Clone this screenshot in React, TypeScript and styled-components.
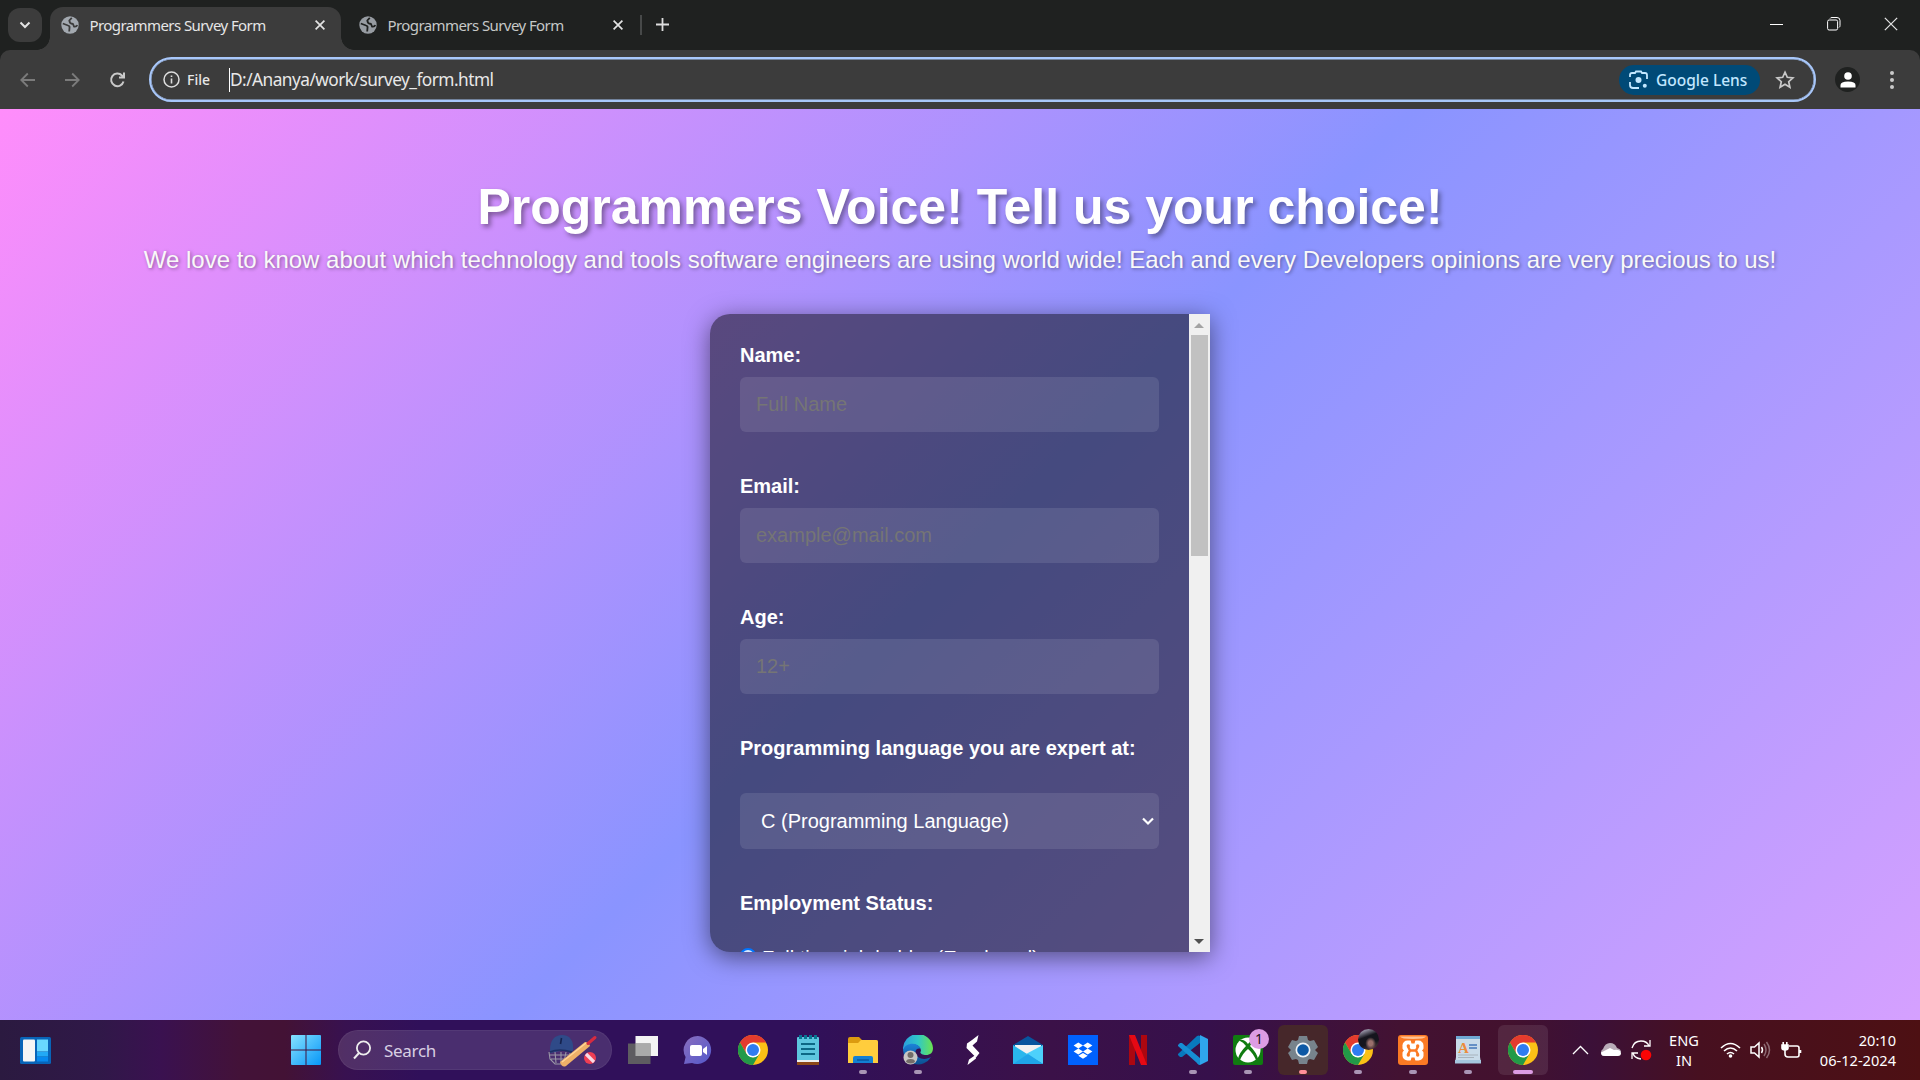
import React from 'react';
import styled, { createGlobalStyle } from 'styled-components';

const ui = '"Noto Sans", "Open Sans", sans-serif';
const arial = '"Liberation Sans", Arial, sans-serif';

const Global = createGlobalStyle`
  * { box-sizing: border-box; }
  body { margin: 0; background: #1f2120; overflow: hidden; }
  svg { display: block; flex: none; }
`;

const Screen = styled.div`
  width: 1920px; height: 1080px; display: flex; flex-direction: column; overflow: hidden;
  font-family: ${ui};
`;

const TabStrip = styled.header`
  height: 50px; display: flex; background: #1f2120; color: #dfe1e0; flex: none;
`;
const TabSearch = styled.button`
  width: 34px; height: 34px; margin: 8px 0 0 8px; padding: 0; border: 0; border-radius: 12px;
  background: #3c3c3c; display: grid; place-items: center; flex: none;
`;
const Tab = styled.div<{ $active?: boolean }>`
  position: relative; height: 43px; margin-top: 7px; display: flex; align-items: center;
  width: ${p => (p.$active ? 291 : 298)}px;
  margin-left: ${p => (p.$active ? 8 : 0)}px;
  padding: 0 16px 7px ${p => (p.$active ? 11 : 18)}px;
  background: ${p => (p.$active ? '#3c3c3c' : 'transparent')};
  border-radius: 13px 13px 0 0; color: ${p => (p.$active ? '#e6e6e6' : '#c6c8c7')};
  ${p => p.$active && `
    &::before, &::after { content: ''; position: absolute; bottom: 0; width: 13px; height: 13px; }
    &::before { left: -13px; background: radial-gradient(circle at 0 0, transparent 12.5px, #3c3c3c 13px); }
    &::after { right: -13px; background: radial-gradient(circle at 100% 0, transparent 12.5px, #3c3c3c 13px); }
  `}
`;
const TabTitle = styled.span`
  font-size: 15px; margin-left: 10.5px; white-space: nowrap; flex: 1; letter-spacing: -0.58px;
`;
const Divider = styled.i`width: 2px; height: 20px; background: #474949; margin: 15px 13px 0 1px;`;
const PlusWrap = styled.div`margin-top: 17px;`;
const WindowButtons = styled.div`
  margin-left: auto; display: flex; gap: 43px; padding: 17px 22px 0 0;
`;

const Toolbar = styled.div`
  height: 59px; background: #3c3c3c; display: flex; align-items: center; padding: 0 18px 0 17px;
  border-radius: 10px 10px 0 0; flex: none;
`;
const Nav = styled.div`display: flex; gap: 23px; width: 132px;`;
const AddressBar = styled.div`
  width: 1667px; height: 45px; border: 2px solid #a8c7fa; border-radius: 23px; display: flex;
  box-shadow: inset 0 0 0 .5px #a8c7fa;
  align-items: center; padding: 0 19px 0 12px; color: #e8e8e8;
`;
const FileChip = styled.span`font-size: 14px; font-weight: 500; margin-left: 7px; width: 42px;`;
const Url = styled.span`
  font-size: 17.3px; border-left: 1.5px solid #fff; height: 24px; line-height: 24px; letter-spacing: -0.54px;
  flex: 1;
`;
const Lens = styled.button`
  width: 141px; height: 30px; border: 0; border-radius: 15px; background: #004a77; color: #c2e7ff;
  font: 500 15.5px ${ui}; display: flex; align-items: center; gap: 8px; padding: 0 0 0 10px;
  margin-right: 15px; white-space: nowrap;
`;
const Avatar = styled.div`
  width: 25px; height: 25px; border-radius: 50%; background: #1f2120; margin-left: 19px;
  display: grid; place-items: center;
`;
const Menu = styled.div`margin-left: auto;`;

const Page = styled.main`
  height: 911px; flex: none; display: flex; flex-direction: column; align-items: center;
  background: linear-gradient(135deg, #ff8dfb, #8a94ff, #d5a0ff);
  font-family: ${arial}; color: #fff;
`;
const Title = styled.h1`
  margin: 69px 0 0; font-size: 50px; line-height: 58px; font-weight: 700;
  text-shadow: 2.5px 2.5px 5px rgba(0,0,0,.4); white-space: nowrap;
`;
const Subtitle = styled.p`
  margin: 10px 0 0; font-size: 24px; line-height: 28px; text-shadow: 1.25px 1.25px 3.75px rgba(0,0,0,.4);
  white-space: nowrap; color: #f9f9f9;
`;
const Card = styled.section`
  width: 500px; height: 638px; border-radius: 20px 0 0 20px;
  display: flex; background: rgba(0,0,0,.5); overflow: hidden;
`;
const CardShadow = styled.div`
  border-radius: 20px 0 0 20px; margin-top: 40px; box-shadow: 0 5px 25px rgba(0,0,0,.5);
`;
const Form = styled.form`flex: 1; padding: 29px 30px 0; overflow: hidden;`;
const Label = styled.label<{ $gap: number }>`
  display: block; font-size: 20px; line-height: 24px; font-weight: 700; margin-bottom: ${p => p.$gap}px;
  white-space: nowrap;
`;
const Input = styled.input`
  display: block; width: 419px; height: 55px; border: 0; border-radius: 6px; margin-bottom: 42px;
  background: rgba(255,255,255,.1); color: #fff; font: 20px ${arial}; padding: 0 16px;
  &::placeholder { color: #757575; opacity: 1; }
`;
const SelectBox = styled.div`
  width: 419px; height: 56px; border-radius: 6px; margin-bottom: 42px; background: rgba(255,255,255,.1);
  font-size: 20px; display: flex; align-items: center; justify-content: space-between; padding: 0 4px 0 21px;
`;
const RadioRow = styled.div`display: flex; align-items: flex-start; font-size: 20px; line-height: 24px; white-space: nowrap;`;
const Radio = styled.i`
  width: 16px; height: 16px; border-radius: 50%; border: 2px solid #0075ff; background: #d8e8ff;
  margin: 2px 6px 0 0;
`;
const ScrollTrack = styled.div`
  width: 21px; background: #f0f0f0; display: flex; flex-direction: column; align-items: center;
`;
const ArrowBox = styled.div<{ $top?: number }>`
  height: 21px; width: 21px; display: grid; place-items: center; padding: ${p => p.$top || 0}px 1px 0 0;
`;
const Thumb = styled.div`width: 17px; height: 221px; background: #c1c1c1; margin-bottom: auto;`;

const Taskbar = styled.footer`
  height: 60px; flex: none; display: flex; align-items: center; color: #fff; position: relative;
  background: linear-gradient(90deg, #2b1a40 0, #301848 100px, #3a1150 160px, #431238 240px, #431235 285px, #381150 345px,
    #30105a 420px, #30105a 800px, #3b1148 1050px, #36104b 1210px, #431232 1400px, #43112e 1510px, #3b1038 1590px, #471020 1700px, #4d1013 1920px);
`;
const Widgets = styled.div`width: 291px; padding-left: 20px;`;
const Search = styled.div`
  width: 274px; height: 40px; margin-left: 17px; border-radius: 20px; background: rgba(255,255,255,.13);
  border: 1px solid rgba(255,255,255,.05); display: flex; align-items: center; padding: 0 8px 0 13px;
  font-size: 17px; color: #d8cfe3;
`;
const SearchText = styled.span`flex: 1; margin-left: 12px; letter-spacing: -0.3px;`;
const Apps = styled.div`display: flex; margin-left: 3px;`;
const AppSlot = styled.div<{ $bg?: string; $mark?: string; $wide?: boolean }>`
  position: relative; width: 55px; height: 60px; display: grid; place-items: center;
  &::before { content: ''; position: absolute; inset: 5px 2.5px; border-radius: 6px; background: ${p => p.$bg || 'transparent'}; }
  &::after {
    content: ''; position: absolute; bottom: 6px; height: 4px; border-radius: 2px;
    width: ${p => (p.$wide ? 20 : 8)}px; background: ${p => p.$mark || 'transparent'};
  }
  svg { position: relative; }
`;
const Badge = styled.b`
  position: absolute; top: 9px; right: 6px; width: 20px; height: 20px; border-radius: 50%; background: #dc9ce4;
  color: #1f1022; font-weight: 400; font-size: 14px; line-height: 20px; text-align: center;
`;
const Photo = styled.div`
  position: absolute; right: 6px; top: 9px; width: 21px; height: 21px; border-radius: 50%;
  background: radial-gradient(ellipse at 60% 68%, #9a706c 0 12%, transparent 30%), linear-gradient(160deg, #8d8a9c 0 15%, #15151d 38% 65%, #6b4749);
`;
const Tray = styled.div`display: flex; align-items: center; margin-left: auto; height: 60px; padding-right: 24px;`;
const Stack = styled.div<{ $align: string; $w: number; $m: number }>`
  width: ${p => p.$w}px; margin: 0 ${p => p.$m}px 0 0; text-align: ${p => p.$align};
  font-size: 14.6px; line-height: 20px; white-space: nowrap;
`;
const TrayIcon = styled.div<{ $m: number }>`margin-right: ${p => p.$m}px;`;

const Globe = ({ dim }: { dim?: boolean }) => (
  <svg width="18" height="18" viewBox="0 0 18 18">
    <circle cx="9" cy="9" r="8.7" fill={dim ? '#979ca2' : '#a3a9b0'} />
    <path d="M1.800 7.500 7 9.500Q9 10 8.500 12L8.200 15.500M10.800 1.800 8.300 4.500Q8.500 7.800 12 8L13 10.500Q15.500 11 16.300 9" fill="none" stroke={dim ? '#1f2120' : '#3c3c3c'} strokeWidth="1.800" />
  </svg>
);
const Cross = ({ s = 10, w = 1.7 }: { s?: number; w?: number }) => (
  <svg width={s} height={s} viewBox="0 0 10 10"><path d="M.6 .6 9.4 9.4M9.4 .6 .6 9.4" stroke="#e3e3e3" strokeWidth={w} /></svg>
);
const BackArrow = () => (
  <svg width="22" height="22" viewBox="0 0 22 22"><path d="M18 11H4.500M10.800 4.500 4.300 11l6.500 6.500" fill="none" stroke="#7b7b7b" strokeWidth="1.800" /></svg>
);
const ForwardArrow = () => (
  <svg width="22" height="22" viewBox="0 0 22 22"><path d="M3 11H16.500M10.200 4.500 16.700 11l-6.500 6.500" fill="none" stroke="#7b7b7b" strokeWidth="1.800" /></svg>
);
const Chrome = () => (
  <svg width="30" height="30" viewBox="0 0 30 30">
    <circle cx="15" cy="15" r="15" fill="#fbc116" />
    <path d="M2 7.5A15 15 0 0 1 28 7.5H15L8.5 18.8Z" fill="#e33b2e" />
    <path d="M2 7.5A15 15 0 0 0 15 30L21.5 18.8 15 22.5 8.5 18.8Z" fill="#229a48" />
    <circle cx="15" cy="15" r="7.5" fill="#fff" /><circle cx="15" cy="15" r="6" fill="#2f7cf0" />
  </svg>
);
const Cricket = () => (
  <svg width="56" height="34" viewBox="0 0 56 34">
    <path d="M2 19l1 7 5 5h7l7-5 1-6M2 22h20M4 26h17M8 19l1 11M14 19v12M19 19l-2 10" fill="none" stroke="#9a98a6" strokeWidth="1.100" />
    <path d="M3 17C3 7 8 2 15 2c8 0 12 6 11 15l-1 3q-5-3-12-2l-10 2z" fill="#2f4a88" />
    <path d="M3 19q9-4 22 0" fill="none" stroke="#1d2f63" strokeWidth="1.500" /><path d="M14.500 5l-1 6" stroke="#14224d" strokeWidth="1.600" />
    <path d="M13 29 38 9q4 0 5 4L19 33q-4 2-6-4z" fill="#eeb068" /><path d="M15 29 39 10" stroke="#ffd597" strokeWidth="1.400" />
    <path d="M41 10.500 48 4.500" stroke="#d62b40" strokeWidth="3" strokeLinecap="round" />
    <circle cx="43" cy="25" r="6" fill="#ef3e53" /><path d="M39 21l8 8" stroke="#f7dbe6" strokeWidth="3.200" />
  </svg>
);

const TaskView = () => (
  <svg width="30" height="28" viewBox="0 0 30 28"><path d="M7.5 0H30V20H7.5Z" fill="#f3f3f3" /><path d="M0 7.5H22.5V28H0Z" fill="#626262" opacity=".93" /><path d="M7.5 7.5H22.5V20H7.5Z" fill="#aaa" /></svg>
);
const Chat = () => (
  <svg width="30" height="30" viewBox="0 0 30 30">
    <defs><linearGradient id="chat" x2="1" y2="1"><stop stopColor="#8a6ebd" /><stop offset="1" stopColor="#5359cc" /></linearGradient></defs>
    <path d="M15 1A14 14 0 1 1 9 28L1 29 2.6 22A14 14 0 0 1 15 1Z" fill="url(#chat)" />
    <rect x="7" y="10" width="12" height="11" rx="2" fill="#fff" /><path d="M20 14l4-3v9l-4-3z" fill="#fff" />
  </svg>
);
const Notepad = () => (
  <svg width="22" height="30" viewBox="0 0 22 30">
    <rect y="2" width="22" height="24" rx="1" fill="#5dc6df" /><path d="M0 25h22v2H0z" fill="#eee" /><path d="M0 27h22v3H0z" fill="#8b4718" />
    <path d="M4 9h14M4 14h14M4 19h14" stroke="#0c6885" strokeWidth="2" />
    <path d="M3.500 0v4M8.500 0v4M13.500 0v4M18.500 0v4" stroke="#087593" strokeWidth="3" />
  </svg>
);
const Folder = () => (
  <svg width="30" height="26" viewBox="0 0 30 26">
    <path d="M0 2q0-2 2-2h9l3 3h14q2 0 2 2v8H0z" fill="#dc9b10" />
    <path d="M0 6h10l3-3h15q2 0 2 2v21H0z" fill="#ffcd3d" />
    <path d="M5 26v-5q0-2 2-2h16q2 0 2 2v5z" fill="#1380d3" /><path d="M9 23h12" stroke="#075198" strokeWidth="1.3" />
  </svg>
);
const Edge = () => (
  <svg width="30" height="30" viewBox="0 0 30 30">
    <defs>
      <linearGradient id="edgeTop"><stop stopColor="#2a9ddd" /><stop offset=".5" stopColor="#30c7c8" /><stop offset="1" stopColor="#6be34f" /></linearGradient>
      <linearGradient id="edgeLow" x2="0" y2="1"><stop stopColor="#1c82d8" /><stop offset="1" stopColor="#0b4f91" /></linearGradient>
    </defs>
    <path d="M0 15A15 15 0 0 1 30 13C30 18 27 20 23 20S16 18 18 16C18 9 7 6 0 15Z" fill="url(#edgeTop)" />
    <path d="M0 15C3 7 15 7 18 14 13 12 10 18 15 22 19 25 25 24 28 22A15 15 0 0 1 0 15Z" fill="url(#edgeLow)" />
    <circle cx="7.5" cy="22.5" r="7" fill="#c9c7c4" /><circle cx="7.5" cy="20" r="3" fill="#736d69" /><path d="M3 27q0-3 4.500-3t4.500 3q-4 3-9 0z" fill="#736d69" />
  </svg>
);
const Bolt = () => (
  <svg width="14" height="30" viewBox="0 0 14 30"><path d="M12.500 0 11 6.500 6.500 10.500 13.500 18 10 22.500 .5 13 1 8.500 6 5Z" fill="#fff" /><path d="M9.500 20 10 23.500 1.500 30 3 24.500Z" fill="#fff" /></svg>
);
const Mail = () => (
  <svg width="30" height="28" viewBox="0 0 30 28">
    <path d="M0 9 15 0 30 9V20H0Z" fill="#07559e" /><path d="M2 9h26v10H2z" fill="#f1f1f1" />
    <path d="M0 9 30 28H0Z" fill="#29b7ed" /><path d="M30 9V28L13 18Z" fill="#4dd1fb" /><path d="M0 28 15 18 30 28Z" fill="#1fa5e9" />
  </svg>
);
const Dropbox = () => (
  <svg width="30" height="30" viewBox="0 0 30 30"><path d="M0 0h30v30H0z" fill="#0061fe" />
    <path d="M10.300 7.500l4.700 3-4.700 3-4.700-3zM19.700 7.500l4.700 3-4.700 3-4.700-3zM10.300 13.500l4.700 3-4.700 3-4.700-3zM19.700 13.500l4.700 3-4.700 3-4.700-3zM15 18l4.700 2.700-4.700 3-4.700-3z" fill="#fff" /></svg>
);
const Netflix = () => (
  <svg width="18" height="30" viewBox="0 0 18 30"><path d="M0 0h6v30H0zM12 0h6v30h-6z" fill="#ac0710" /><path d="M0 0h6l12 30h-6z" fill="#e50914" /></svg>
);
const Code = () => (
  <svg width="30" height="30" viewBox="0 0 30 30">
    <path d="M22 0l8 4v22l-8 4-3-2 3-5V8z" fill="#2fa5ed" /><path d="M0 19 19 1q2-1 3 0v7L4 22H2L0 20z" fill="#0878bd" />
    <path d="M0 10 2 8h2l18 15v7q-2 0-3-2L0 11z" fill="#168dd3" />
  </svg>
);
const Xbox = () => (
  <svg width="30" height="30" viewBox="0 0 30 30"><rect width="30" height="30" rx="2" fill="#107c10" /><circle cx="15" cy="15" r="12.500" fill="#fff" />
    <path d="M7 5q4-1 8 4 4-5 8-4l-1 1q-3 1-5 5 7 7 8 13l-2 1q-3-7-8-11-5 4-8 11l-2-1q1-6 8-13-3-4-6-5z" fill="#107c10" /></svg>
);
const Gear = () => (
  <svg width="30" height="30" viewBox="0 0 30 30">
    <path d="M11 1h8l1 4 2 1 4-1 4 7-3 3 3 3-4 7-4-1-2 1-1 4h-8l-1-4-2-1-4 1-4-7 3-3-3-3 4-7 4 1 2-1z" fill="#77838c" />
    <circle cx="15" cy="15" r="7.500" fill="#eff3f6" /><circle cx="15" cy="15" r="5.800" fill="#0d59a5" />
  </svg>
);
const Xampp = () => (
  <svg width="30" height="30" viewBox="0 0 30 30"><rect width="30" height="30" rx="3" fill="#fb7a24" /><path d="M2 1.500h26q-1 2.500-13 2.500T2 1.500" fill="#ffc395" />
    <rect x="4.500" y="5.500" width="21" height="20" rx="5" fill="#fff" />
    <path d="M12.500 5h5l-1 3.500h-3zM12.500 26h5l-1-3.500h-3zM4 13.500l2 2-2 2zM26 13.500l-2 2 2 2z" fill="#fb7a24" />
    <circle cx="10.300" cy="11" r="1.700" fill="#fb7a24" /><circle cx="19.700" cy="11" r="1.700" fill="#fb7a24" />
    <circle cx="10.300" cy="20" r="1.700" fill="#fb7a24" /><circle cx="19.700" cy="20" r="1.700" fill="#fb7a24" />
    <path d="M10 11.500 12 15.500 10 19.500M20 11.500 18 15.500 20 19.500M12 15.500h6" fill="none" stroke="#fb7a24" strokeWidth="2.400" />
  </svg>
);
const WordPad = () => (
  <svg width="26" height="28" viewBox="0 0 26 28">
    <path d="M1 0h24v21l1 6H0l1-6z" fill="#c9dbe9" /><path d="M1 0h24v3H1z" fill="#6fa8d3" /><path d="M0 24h26v3.500H0z" fill="#a5c6de" />
    <text x="3" y="17" fontFamily="Liberation Serif" fontWeight="700" fontSize="15" fill="#ec8c3d">A</text>
    <path d="M14 9h8M14 12h8" stroke="#4678b9" strokeWidth="1.600" /><path d="M3 19h20M3 21.500h16" stroke="#a8b3bd" />
  </svg>
);

const dot = '#a995b5';
const fields = [['Name:', 'Full Name'], ['Email:', 'example@mail.com'], ['Age:', '12+']];

export default function App() {
  return (
    <Screen>
      <Global />
      <TabStrip>
        <TabSearch><svg width="12" height="8" viewBox="0 0 12 8"><path d="M1.500 1.500 6 6l4.500-4.500" fill="none" stroke="#e3e3e3" strokeWidth="2" /></svg></TabSearch>
        <Tab $active><Globe /><TabTitle>Programmers Survey Form</TabTitle><Cross /></Tab>
        <Tab><Globe dim /><TabTitle>Programmers Survey Form</TabTitle><Cross /></Tab>
        <Divider />
        <PlusWrap><svg width="15" height="15" viewBox="0 0 15 15"><path d="M7.500 1v13M1 7.500h13" stroke="#ddd" strokeWidth="1.800" /></svg></PlusWrap>
        <WindowButtons>
          <svg width="14" height="14" viewBox="0 0 14 14"><path d="M0 7.500h13" stroke="#fff" /></svg>
          <svg width="14" height="14" viewBox="0 0 14 14" fill="none" stroke="#fff"><rect x=".6" y="3" width="10" height="10" rx="1.500" /><path d="M3 1.500q.5-1 2-1h5q3 0 3 3v5q0 1.500-1 2" /></svg>
          <Cross s={14} w={0.9} />
        </WindowButtons>
      </TabStrip>
      <Toolbar>
        <Nav>
          <BackArrow /><ForwardArrow />
          <svg width="22" height="22" viewBox="0 0 22 22"><path d="M16.500 12.500A6.300 6.300 0 1 1 15 6.500L17 8.500M17 3.500v5h-5" fill="none" stroke="#c9c9c9" strokeWidth="2" /></svg>
        </Nav>
        <AddressBar>
          <svg width="17" height="17" viewBox="0 0 17 17"><circle cx="8.500" cy="8.500" r="7.500" fill="none" stroke="#ddd" strokeWidth="1.500" /><path d="M8.500 7.500v5M8.500 4.400v1.700" stroke="#ddd" strokeWidth="1.600" /></svg>
          <FileChip>File</FileChip>
          <Url>D:/Ananya/work/survey_form.html</Url>
          <Lens>
            <svg width="19" height="19" viewBox="0 0 19 19" fill="none" stroke="#c2e7ff" strokeWidth="1.800">
              <path d="M1 7V5q0-2 2-2h3l1-1.500h5L13 3h3q2 0 2 2v4M1 12v3q0 3 3 3h6" /><circle cx="9.500" cy="10" r="3" fill="#c2e7ff" stroke="none" /><circle cx="15.800" cy="15.800" r="2" fill="#c2e7ff" stroke="none" />
            </svg>
            Google Lens
          </Lens>
          <svg width="20" height="20" viewBox="0 0 20 20"><path d="M10 2.200l2.300 5.100 5.600.6-4.200 3.800 1.200 5.500-4.900-2.900-4.900 2.900 1.200-5.500L2.100 7.900l5.600-.6z" fill="none" stroke="#c9c9c9" strokeWidth="1.700" /></svg>
        </AddressBar>
        <Avatar><svg width="16" height="16" viewBox="0 0 16 16" fill="#fff"><circle cx="8" cy="4" r="3.800" /><path d="M.5 15.500v-2.500q0-3.500 7.500-3.500t7.500 3.500v2.500z" /></svg></Avatar>
        <Menu><svg width="20" height="20" viewBox="0 0 20 20" fill="#c9c9c9"><circle cx="10" cy="3" r="2" /><circle cx="10" cy="10" r="2" /><circle cx="10" cy="17" r="2" /></svg></Menu>
      </Toolbar>
      <Page>
        <Title>Programmers Voice! Tell us your choice!</Title>
        <Subtitle>We love to know about which technology and tools software engineers are using world wide! Each and every Developers opinions are very precious to us!</Subtitle>
        <CardShadow>
          <Card>
            <Form>
              {fields.map(([label, hint]) => (
                <React.Fragment key={label}><Label $gap={10}>{label}</Label><Input placeholder={hint} /></React.Fragment>
              ))}
              <Label $gap={33}>Programming language you are expert at:</Label>
              <SelectBox>C (Programming Language)<svg width="14" height="10" viewBox="0 0 14 10"><path d="M2 2.500l5 5 5-5" fill="none" stroke="#fff" strokeWidth="2.200" /></svg></SelectBox>
              <Label $gap={31}>Employment Status:</Label>
              <RadioRow><Radio />Full time job holder (Employed)</RadioRow>
            </Form>
            <ScrollTrack>
              <ArrowBox $top={2}><svg width="10" height="5" viewBox="0 0 10 5"><path d="M5 0l5 5H0z" fill="#a3a3a3" /></svg></ArrowBox>
              <Thumb />
              <ArrowBox><svg width="10" height="5" viewBox="0 0 10 5"><path d="M0 0h10L5 5z" fill="#505050" /></svg></ArrowBox>
            </ScrollTrack>
          </Card>
        </CardShadow>
      </Page>
      <Taskbar>
        <Widgets><svg width="31" height="27" viewBox="0 0 31 27"><rect width="31" height="27" rx="1.500" fill="#0864b8" /><rect x="3" y="2.500" width="12" height="22" rx="1" fill="#f5f5f5" /><path d="M17 2.500h11v12H17z" fill="#68d7ff" /><path d="M17 15h11v4.500H17z" fill="#22a9f5" /><path d="M17 20h11v4.500H17z" fill="#0789ee" /></svg></Widgets>
        <svg width="30" height="30" viewBox="0 0 30 30"><defs><linearGradient id="win" x2="1" y2="1"><stop stopColor="#86e2ff" /><stop offset="1" stopColor="#0796f8" /></linearGradient></defs><path d="M0 1q0-1 1-1h13.500v14.500H0zM15.500 0H29q1 0 1 1v13.500H15.500zM0 15.500h14.500V30H1q-1 0-1-1zM15.500 15.500H30V29q0 1-1 1H15.500z" fill="url(#win)" /></svg>
        <Search>
          <svg width="20" height="20" viewBox="0 0 20 20"><circle cx="11.500" cy="8" r="6.600" fill="none" stroke="#eee" strokeWidth="1.800" /><path d="M7 13 2 18.500" stroke="#eee" strokeWidth="2" /></svg>
          <SearchText>Search</SearchText><Cricket />
        </Search>
        <Apps>
          <AppSlot><TaskView /></AppSlot>
          <AppSlot><Chat /></AppSlot>
          <AppSlot><Chrome /></AppSlot>
          <AppSlot><Notepad /></AppSlot>
          <AppSlot $mark={dot}><Folder /></AppSlot>
          <AppSlot $mark={dot}><Edge /></AppSlot>
          <AppSlot><Bolt /></AppSlot>
          <AppSlot><Mail /></AppSlot>
          <AppSlot><Dropbox /></AppSlot>
          <AppSlot><Netflix /></AppSlot>
          <AppSlot $mark={dot}><Code /></AppSlot>
          <AppSlot $mark={dot}><Xbox /><Badge>1</Badge></AppSlot>
          <AppSlot $bg="#46272a" $mark="#ff8f99"><Gear /></AppSlot>
          <AppSlot $mark={dot}><Chrome /><Photo /></AppSlot>
          <AppSlot $mark={dot}><Xampp /></AppSlot>
          <AppSlot $mark={dot}><WordPad /></AppSlot>
          <AppSlot $bg="rgba(255,255,255,.09)" $mark="#dc9ce4" $wide><Chrome /></AppSlot>
        </Apps>
        <Tray>
          <TrayIcon $m={11}><svg width="17" height="10" viewBox="0 0 17 10"><path d="M1 9l7.500-7.500L16 9" fill="none" stroke="#fff" strokeWidth="1.300" /></svg></TrayIcon>
          <TrayIcon $m={10}><svg width="21" height="14" viewBox="0 0 21 14"><path d="M3 13a4 4 0 0 1 0-7Q5 0 10 0q5 0 7 5 4 1 4 4z" fill="#b9acb8" /><path d="M5 13q-4 0-4-3.500l9-4.500 4 2q6-1 7 3 0 3-3 3z" fill="#fff" /></svg></TrayIcon>
          <TrayIcon $m={17}><svg width="21" height="22" viewBox="0 0 21 22"><path d="M1 9Q3 2 10 2q6 0 8 5M19 1v6h-6M2 14q1 5 8 6M1 20v-6h6" fill="none" stroke="#fff" strokeWidth="1.300" /><circle cx="15" cy="16" r="5.300" fill="#fb0505" /></svg></TrayIcon>
          <Stack $align="center" $w={30} $m={21}>ENG<br />IN</Stack>
          <TrayIcon $m={9}><svg width="21" height="16" viewBox="0 0 21 16"><path d="M1 6Q10.500-3 20 6M4 9q6.500-6 13 0M7 12q3.500-3 7 0" fill="none" stroke="#fff" strokeWidth="1.600" /><circle cx="10.500" cy="14" r="1.800" fill="#fff" /></svg></TrayIcon>
          <TrayIcon $m={10}><svg width="21" height="18" viewBox="0 0 21 18" fill="none" stroke="#fff" strokeWidth="1.500"><path d="M1 6h3.500L9 2v14l-4.500-4H1zM11.500 6q2 3 0 6" /><path d="M14 3q4 6 0 12M16.500 1q6 8 0 16" stroke="#8d6972" /></svg></TrayIcon>
          <TrayIcon $m={16}><svg width="21" height="17" viewBox="0 0 21 17" fill="none" stroke="#fff" strokeWidth="1.600"><path d="M8 4h8q2 0 2 2v7q0 2-2 2H7q-3 0-3-3V7M19.500 8v3" /><path d="M1 3h6v3q0 2-3 2T1 6zM2.200 0v3M5.800 0v3" fill="#fff" /></svg></TrayIcon>
          <Stack $align="right" $w={78} $m={0}>20:10<br />06-12-2024</Stack>
        </Tray>
      </Taskbar>
    </Screen>
  );
}
